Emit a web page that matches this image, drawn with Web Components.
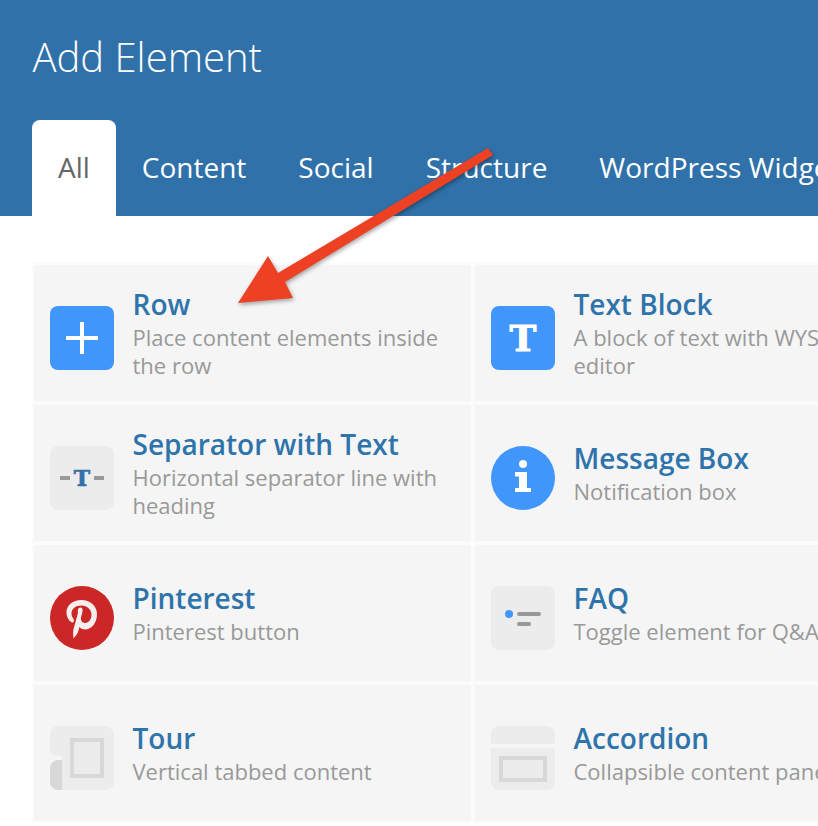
<!DOCTYPE html>
<html>
<head>
<meta charset="utf-8">
<title>Add Element</title>
<style>
  html, body { margin: 0; padding: 0; background: #fff; overflow: hidden; height: 100%; }
  body { font-family: "Open Sans", sans-serif; }
</style>
</head>
<body>
<add-element-page>
  <element-tabs slot="header" title="Add Element">
    <element-tab active>All</element-tab>
    <element-tab>Content</element-tab>
    <element-tab>Social</element-tab>
    <element-tab>Structure</element-tab>
    <element-tab>WordPress Widgets</element-tab>
  </element-tabs>
  <element-grid>
    <element-card name="Row" desc="Place content elements inside the row"><element-icon type="row"></element-icon></element-card>
    <element-card name="Text Block" desc="A block of text with WYSIWYG editor"><element-icon type="text"></element-icon></element-card>
    <element-card name="Separator with Text" desc="Horizontal separator line with heading"><element-icon type="separator"></element-icon></element-card>
    <element-card name="Message Box" desc="Notification box"><element-icon type="message"></element-icon></element-card>
    <element-card name="Pinterest" desc="Pinterest button"><element-icon type="pinterest"></element-icon></element-card>
    <element-card name="FAQ" desc="Toggle element for Q&amp;A block"><element-icon type="faq"></element-icon></element-card>
    <element-card name="Tour" desc="Vertical tabbed content"><element-icon type="tour"></element-icon></element-card>
    <element-card name="Accordion" desc="Collapsible content panels"><element-icon type="accordion"></element-icon></element-card>
  </element-grid>
  <pointer-arrow></pointer-arrow>
</add-element-page>

<script>
class AddElementPage extends HTMLElement {
  constructor() {
    super();
    this.attachShadow({ mode: 'open' });
    this.shadowRoot.innerHTML = `
      <style>
        :host {
          display: block;
          position: relative;
          width: 818px;
          height: 826px;
          overflow: hidden;
        }
      </style>
      <slot name="header"></slot>
      <slot></slot>
    `;
  }
}

class ElementTabs extends HTMLElement {
  constructor() {
    super();
    this.attachShadow({ mode: 'open' });
    this.shadowRoot.innerHTML = `
      <style>
        :host {
          display: block;
          height: 216px;
          background: #3071a9;
          overflow: hidden;
        }
        h1 {
          margin: 0;
          padding: 30px 0 0 32.5px;
          height: 120px;
          box-sizing: border-box;
          font-family: "Open Sans", sans-serif;
          font-weight: 300;
          font-size: 40px;
          line-height: 54px;
          color: #fff;
        }
        nav {
          display: flex;
          padding-left: 32px;
          white-space: nowrap;
        }
      </style>
      <h1></h1>
      <nav><slot></slot></nav>
    `;
    this.shadowRoot.querySelector('h1').textContent = this.getAttribute('title');
    this.removeAttribute('title');
  }
}

class ElementTab extends HTMLElement {
  constructor() {
    super();
    this.attachShadow({ mode: 'open' });
    this.shadowRoot.innerHTML = `
      <style>
        :host {
          display: block;
          flex: none;
          height: 96px;
          padding: 27px 26px 0;
          box-sizing: border-box;
          font-family: "Open Sans", sans-serif;
          font-size: 28px;
          line-height: 41px;
          color: #fff;
          border-radius: 8px 8px 0 0;
        }
        :host([active]) {
          background: #fff;
          color: #666;
        }
      </style>
      <slot></slot>
    `;
  }
}

class ElementGrid extends HTMLElement {
  constructor() {
    super();
    this.attachShadow({ mode: 'open' });
    this.shadowRoot.innerHTML = `
      <style>
        :host {
          display: grid;
          grid-template-columns: 441px 441px;
          grid-auto-rows: 140px;
          padding: 47px 0 0 32px;
          width: 914px;
          box-sizing: border-box;
        }
      </style>
      <slot></slot>
    `;
  }
}

class ElementCard extends HTMLElement {
  constructor() {
    super();
    this.attachShadow({ mode: 'open' });
    this.shadowRoot.innerHTML = `
      <style>
        :host {
          display: flex;
          align-items: center;
          gap: 18.5px;
          padding: 0 16px;
          box-sizing: border-box;
          background: #f5f5f5;
          border: 2px solid #fbfbfb;
        }
        .text { flex: 1; min-width: 0; padding-bottom: 2px; }
        .name {
          font-size: 28px;
          font-weight: 600;
          line-height: 36px;
          margin-bottom: 1px;
          color: #2e74ab;
        }
        .desc {
          font-size: 22px;
          line-height: 28px;
          color: #999;
        }
      </style>
      <slot></slot>
      <div class="text">
        <div class="name"></div>
        <div class="desc"></div>
      </div>
    `;
    this.shadowRoot.querySelector('.name').textContent = this.getAttribute('name');
    this.shadowRoot.querySelector('.desc').textContent = this.getAttribute('desc');
  }
}

const ICONS = {
  row: `<div class="tile blue">
      <svg width="64" height="64" viewBox="0 0 64 64"><path d="M16 30h14V16h4v14h14v4H34v14h-4V34H16z" fill="#fff"/></svg>
    </div>`,
  text: `<div class="tile blue"><span class="glyph" style="color:#fff;font-size:36px;-webkit-text-stroke:1px #fff">T</span></div>`,
  separator: `<div class="tile grey sep"><i></i><span class="glyph" style="color:#3071a9;font-size:22px;-webkit-text-stroke:.6px #3071a9">T</span><i></i></div>`,
  message: `<svg width="64" height="64" viewBox="0 0 64 64">
      <circle cx="32" cy="32" r="32" fill="#4096fb"/>
      <circle cx="32" cy="18" r="4" fill="#fff"/>
      <path d="M24 26.500a.500.500 0 0 1 .500-.500H36V42h3.500a.500.500 0 0 1 .500.500v3a.500.500 0 0 1-.500.500h-15a.500.500 0 0 1-.500-.500v-3a.500.500 0 0 1 .500-.500H28V30.500h-3.500a.500.500 0 0 1-.500-.500z" fill="#fff"/>
    </svg>`,
  pinterest: `<svg width="64" height="64" viewBox="0 0 64 64">
      <circle cx="32" cy="32" r="32" fill="#cb2727"/>
      <path fill="#f7eeee" d="M22 36.500C18 34 16.500 30 16.500 26.500C16.500 19 23 14 31.500 14C40 14 47 20 47 28C47 37 41.500 43.500 35 43.500C32.500 43.500 30.500 42.500 29.500 41L28 46C27.500 48 24.500 51 23.500 52.500C23 49 23 46 23.500 43L28 27C27.500 24.500 28 21.500 30.500 21.500C33 21.500 32.800 24.500 32.300 26.500L31 31.500C30.500 34 32 37 35 37C39 37 41.500 33 41.500 28.500C41.500 23.500 37 19.500 31.500 19.500C25.500 19.500 21.500 23 21.500 27.500C21.500 30 22.500 31.500 23.500 33C24.500 35 23.500 37 22 36.500Z"/>
    </svg>`,
  faq: `<svg width="64" height="64" viewBox="0 0 64 64">
      <rect width="64" height="64" rx="8" fill="#ececec"/>
      <circle cx="18" cy="28" r="4" fill="#4096fb"/>
      <rect x="26" y="26" width="24" height="4" rx="2" fill="#999"/>
      <rect x="26" y="36" width="14" height="4" rx="2" fill="#999"/>
    </svg>`,
  tour: `<svg width="64" height="64" viewBox="0 0 64 64">
      <path d="M8 0H56a8 8 0 0 1 8 8V56a8 8 0 0 1-8 8H12V30H6a6 6 0 0 1-6-6V8a8 8 0 0 1 8-8z" fill="#ececec"/>
      <path d="M12 34V64H8a8 8 0 0 1-8-8V42a8 8 0 0 1 8-8z" fill="#d8d8d8"/>
      <rect x="22" y="14" width="30" height="36" fill="none" stroke="#d8d8d8" stroke-width="4"/>
    </svg>`,
  accordion: `<svg width="64" height="64" viewBox="0 0 64 64">
      <path d="M8 0H56a8 8 0 0 1 8 8V18H0V8a8 8 0 0 1 8-8z" fill="#ececec"/>
      <path d="M0 22H64V56a8 8 0 0 1-8 8H8a8 8 0 0 1-8-8z" fill="#ececec"/>
      <rect x="10" y="32" width="44" height="22" fill="none" stroke="#d8d8d8" stroke-width="4"/>
    </svg>`
};

class ElementIcon extends HTMLElement {
  constructor() {
    super();
    this.attachShadow({ mode: 'open' });
    this.shadowRoot.innerHTML = `
      <style>
        :host {
          display: block;
          flex: none;
          width: 64px;
          height: 64px;
          margin-top: 10px;
        }
        svg { display: block; }
        .tile {
          width: 64px;
          height: 64px;
          border-radius: 8px;
          display: flex;
          align-items: center;
          justify-content: center;
        }
        .blue { background: #4096fb; }
        .grey { background: #ececec; }
        .glyph {
          font-family: "DejaVu Serif", serif;
          font-weight: 700;
          line-height: 1;
        }
        .sep { gap: 4px; }
        .sep i {
          display: block;
          width: 10px;
          height: 4px;
          background: #999;
        }
      </style>
      ${ICONS[this.getAttribute('type')]}
    `;
  }
}

class PointerArrow extends HTMLElement {
  constructor() {
    super();
    this.attachShadow({ mode: 'open' });
    this.shadowRoot.innerHTML = `
      <style>
        :host {
          position: absolute;
          left: 0;
          top: 0;
          pointer-events: none;
        }
        svg { display: block; filter: drop-shadow(1px 2px 2px rgba(0,0,0,.35)); }
      </style>
      <svg width="818" height="826" viewBox="0 0 818 826">
        <path fill="#ee4023" d="M488 148L493 155L285 282L293 298L238 303L268 256L278 273Z"/>
      </svg>
    `;
  }
}

customElements.define('add-element-page', AddElementPage);
customElements.define('element-tabs', ElementTabs);
customElements.define('element-tab', ElementTab);
customElements.define('element-grid', ElementGrid);
customElements.define('element-card', ElementCard);
customElements.define('element-icon', ElementIcon);
customElements.define('pointer-arrow', PointerArrow);
</script>
</body>
</html>
